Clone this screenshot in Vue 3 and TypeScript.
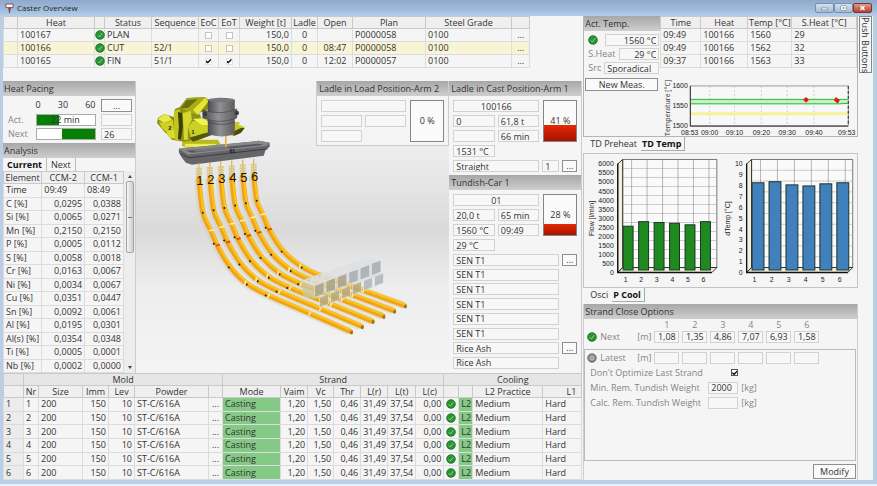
<script setup lang="ts">
interface Heat {
  id: string
  status: string
  seq: string
  eoc: boolean
  eot: boolean
  open: string
  plan: string
}

const heats: Heat[] = [
  { id: '100167', status: 'PLAN', seq: '', eoc: false, eot: false, open: '', plan: 'P0000058' },
  { id: '100166', status: 'CUT', seq: '52/1', eoc: false, eot: false, open: '08:47', plan: 'P0000058' },
  { id: '100165', status: 'FIN', seq: '51/1', eoc: true, eot: true, open: '12:02', plan: 'P0000057' },
]

const analysis: string[][] = [
  ['C [%]', '0,0295', '0,0388'],
  ['Si [%]', '0,0065', '0,0271'],
  ['Mn [%]', '0,2150', '0,2150'],
  ['P [%]', '0,0005', '0,0112'],
  ['S [%]', '0,0058', '0,0018'],
  ['Cr [%]', '0,0163', '0,0067'],
  ['Ni [%]', '0,0034', '0,0067'],
  ['Cu [%]', '0,0351', '0,0447'],
  ['Sn [%]', '0,0092', '0,0061'],
  ['Al [%]', '0,0195', '0,0301'],
  ['Al(s) [%]', '0,0354', '0,0348'],
  ['Ti [%]', '0,0005', '0,0001'],
  ['Nb [%]', '0,0002', '0,0000'],
]

const measurements: string[][] = [
  ['09:49', '100166', '1560', '29'],
  ['09:49', '100166', '1562', '32'],
  ['09:37', '100166', '1563', '33'],
]

const nozzles: string[] = ['SEN T1', 'SEN T1', 'SEN T1', 'SEN T1', 'SEN T1', 'SEN T1', 'Rice Ash', 'Rice Ash']
const closeLengths: string[] = ['1,08', '1,35', '4,86', '7,07', '6,93', '1,58']

/* Strand geometry: centre lines of the outer strands, the rest are interpolated */
type Pt = [number, number]
const first: Pt[] = [[63, 113], [67, 146], [75, 164], [82, 180], [95, 201], [111, 217], [133, 229], [174, 247], [215, 265]]
const last: Pt[] = [[118, 109], [121, 134], [127, 148], [134, 164], [148, 185], [166, 200], [187, 210], [228, 224], [269, 239]]

function strandPoints(i: number): Pt[] {
  const t = i / 5
  return first.map((p, k): Pt => [p[0] + (last[k][0] - p[0]) * t, p[1] + (last[k][1] - p[1]) * t])
}

function smooth(pts: Pt[]): string {
  let d = `M${pts[0][0]} ${pts[0][1]}`
  for (let k = 0; k < pts.length - 1; k++) {
    const a = pts[Math.max(k - 1, 0)]
    const b = pts[k]
    const c = pts[k + 1]
    const e = pts[Math.min(k + 2, pts.length - 1)]
    d += `C${b[0] + (c[0] - a[0]) / 6} ${b[1] + (c[1] - a[1]) / 6} ${c[0] - (e[0] - b[0]) / 6} ${c[1] - (e[1] - b[1]) / 6} ${c[0]} ${c[1]}`
  }
  return d
}

const strands = [0, 1, 2, 3, 4, 5].map((i) => {
  const pts = strandPoints(i)
  return { n: i + 1, pts, d: smooth(pts), x: pts[0][0], y: pts[0][1] }
})

const blocks = [0, 1, 2, 3, 4, 5].map((i) => ({
  ux: 179 + i * 11.4, uy: 219 - i * 4.4, lx: 184 + i * 11, ly: 231 - i * 4.2,
}))

/* Bar charts */
interface BarChart {
  id: string
  title: string
  titleX: number
  axis: number
  wall: number
  right: number
  step: number
  width: number
  fill: string
  labels: string[]
  values: number[]
  max: number
}
const charts: BarChart[] = [
  {
    id: 'flow', title: 'Flow [l/min]', titleX: 10, axis: 34, wall: 39, right: 134, step: 15.6, width: 10, fill: '#1f8a1f',
    labels: Array.from({ length: 13 }, (_, k) => String(k * 500)), values: [2500, 2760, 2710, 2670, 2580, 2760], max: 6000,
  },
  {
    id: 'temp', title: 'dTemp [°C]', titleX: 147, axis: 164, wall: 169, right: 271, step: 17.1, width: 12, fill: '#3f80bd',
    labels: Array.from({ length: 11 }, (_, k) => String(k)), values: [8.3, 8.4, 8.1, 8, 8.2, 8.3], max: 10,
  },
]
const tempTicks: [number, string][] = [[30, '08:53'], [50, '09:00'], [75, '09:10'], [102, '09:20'], [128, '09:30'], [155, '09:40'], [188, '09:53']]
</script>

<template>
  <div class="window">
    <svg class="defs" aria-hidden="true">
      <symbol id="ok" viewBox="0 0 10 10">
        <circle cx="5" cy="5" r="4.6" fill="#2c9436" />
        <circle cx="5" cy="5" r="4.2" fill="none" stroke="#1d7426" stroke-width=".7" />
        <path d="M2.8 5.4 4.3 6.9 7.3 3.2" fill="none" stroke="#9ad997" stroke-width=".9" />
      </symbol>
      <symbol id="off" viewBox="0 0 10 10">
        <circle cx="5" cy="5" r="4.2" fill="#8e8e8e" stroke="#5d5d5d" stroke-width=".9" />
        <circle cx="5" cy="5" r="2" fill="#a5a5a5" stroke="#c4c4c4" stroke-width=".7" />
      </symbol>
    </svg>

    <header class="titlebar">
      <svg class="app-icon" viewBox="0 0 10 12">
        <path d="M1 1h8v4H1z" fill="#fff" stroke="#7d4350" stroke-width="1" />
        <path d="M3 5h4L6 8H4z" fill="#c13a42" />
        <path d="M5 7v4" stroke="#555" stroke-width="1.4" />
      </svg>
      <h1>Caster Overview</h1>
      <div class="controls">
        <button aria-label="Minimize"><svg viewBox="0 0 18 10"><rect x="5" y="5" width="8" height="2.4" fill="#fff" stroke="#64758c" stroke-width=".7" /></svg></button>
        <button aria-label="Restore"><svg viewBox="0 0 18 10"><rect x="5.5" y="2" width="7" height="6" rx="1" fill="#fff" stroke="#64758c" stroke-width=".8" /><rect x="8" y="4" width="2" height="2" fill="#64758c" /></svg></button>
        <button class="close" aria-label="Close"><svg viewBox="0 0 18 10"><path d="M6.5 2.5l5 5m0-5l-5 5" stroke="#fff" stroke-width="1.8" /></svg></button>
      </div>
    </header>

    <main class="body">
      <section class="left">
        <table class="grid heats">
          <colgroup>
            <col class="w14" /><col class="w77" /><col class="w10" /><col class="w47" /><col class="w47" /><col class="w20" /><col class="w21" />
            <col class="w52" /><col class="w26" /><col class="w35" /><col class="w73" /><col /><col class="w18" />
          </colgroup>
          <thead>
            <tr>
              <th></th><th>Heat</th><th></th><th>Status</th><th>Sequence</th><th>EoC</th><th>EoT</th><th>Weight [t]</th>
              <th>Ladle</th><th>Open</th><th>Plan</th><th>Steel Grade</th><th></th>
            </tr>
          </thead>
          <tbody>
            <tr v-for="h in heats" :key="h.id" :class="{ active: h.status === 'CUT' }">
              <td></td><td>{{ h.id }}</td>
              <td class="ic"><svg class="dot"><use href="#ok" /></svg></td>
              <td>{{ h.status }}</td><td>{{ h.seq }}</td>
              <td class="c"><input class="tick" type="checkbox" :checked="h.eoc" :aria-label="`EoC ${h.id}`" /></td>
              <td class="c"><input class="tick" type="checkbox" :checked="h.eot" :aria-label="`EoT ${h.id}`" /></td>
              <td class="r">150,0</td><td class="c">0</td><td class="c">{{ h.open }}</td><td>{{ h.plan }}</td><td>0100</td><td class="c">...</td>
            </tr>
          </tbody>
        </table>

        <div class="middle">
          <aside class="side">
            <h2>Heat Pacing</h2>
            <div class="pacing">
              <span></span>
              <div class="scale"><span>0</span><span>30</span><span>60</span></div>
              <button class="btn">...</button>
              <label class="dim" for="act">Act.</label>
              <div class="bar"><i class="from-start"></i><b>22 min</b></div>
              <input id="act" class="field" readonly />
              <label class="dim" for="next">Next</label>
              <div class="bar"><i class="from-mid"></i></div>
              <input id="next" class="field" value="26" readonly />
            </div>
            <h2>Analysis</h2>
            <nav class="tabs"><button class="on">Current</button><button>Next</button></nav>
            <div class="analysis">
              <table class="grid">
                <colgroup><col /><col class="w43" /><col class="w39" /></colgroup>
                <thead><tr><th>Element</th><th>CCM-2</th><th>CCM-1</th></tr></thead>
                <tbody>
                  <tr><td>Time</td><td>09:49</td><td>08:49</td></tr>
                  <tr v-for="a in analysis" :key="a[0]"><td>{{ a[0] }}</td><td class="r">{{ a[1] }}</td><td class="r">{{ a[2] }}</td></tr>
                </tbody>
              </table>
              <div class="scroll"><i class="up"></i><b></b><i class="down"></i></div>
            </div>
          </aside>

          <div class="scene">
            <svg viewBox="0 14 314 292" preserveAspectRatio="xMinYMin meet" role="img" aria-label="Caster">
              <defs>
                <linearGradient id="drum"><stop offset="0" stop-color="#4b4b4d" /><stop offset=".45" stop-color="#919194" /><stop offset="1" stop-color="#5c5c5f" /></linearGradient>
              </defs>
              <!-- ladle turret -->
              <path d="M47 73h35l3 5-6 4H52l-6-3z" fill="#b9bb1c" />
              <path d="M49 77h31v3H49z" fill="#eced62" />
              <path d="M94 55 104 55 103 58 109 60 106 65 98 69 93 68z" fill="#c6c91e" />
              <path d="M97 65 105 61 109 61 105 66 98 69z" fill="#4b4c0d" />
              <path d="M22 51 28 47 38 50 39 42 44 40 51 31 68 30 73 33 74 44 64 50 74 54 79 62 77 67 67 71 60 73 48 75 36 73 27 63 21 56z" fill="#8e9112" />
              <path d="M45 40 52 31 69 30 73 33 60 47 53 46z" fill="#a9ac15" />
              <path d="M57 43 69 31 73 34 62 48z" fill="#e3e636" />
              <path d="M45 41 51 33 62 32 52 41z" fill="#6d6f0e" />
              <path d="M22 52 28 47 33 49 36 53 28 56z" fill="#e7ea48" />
              <path d="M23 55 29 56 37 53 38 63 33 67 26 61z" fill="#cfd224" />
              <path d="M30 66 38 62 40 72 34 71z" fill="#d9dc2d" />
              <path d="M38 44 44 42 45 72 40 74 38 66z" fill="#c2c51d" />
              <path d="M42 45 46 46 47 60 45 73 42 72 43 60z" fill="#3c3e0a" />
              <path d="M47 46 55 44 56 53 52 60 52 73 48 73z" fill="#d5d82a" />
              <path d="M52 60 57 54 68 55 76 59 78 64 65 68 55 70z" fill="#cdd024" />
              <path d="M57 52 68 51 76 58 66 58z" fill="#eff254" />
              <path d="M54 71 66 67 78 64 76 68 66 72 57 75z" fill="#55570c" />
              <path d="M63 46 74 42V51L67 52z" fill="#e9e9e2" />
              <text class="arm" x="34" y="63">2</text><text class="arm" x="57" y="67">1</text>
              <!-- ladle -->
              <path d="M72 33v34q14 5 27 0V33z" fill="url(#drum)" />
              <ellipse cx="85.5" cy="33" rx="13.5" ry="2.2" fill="#77777b" />
              <path d="M67 43q18 6 34-1v9q-17 7-34 0z" fill="url(#drum)" stroke="#3f3f42" stroke-width=".6" />
              <path d="M72 55q14 5 27 0" fill="none" stroke="#424245" stroke-width=".7" />
              <circle cx="69" cy="47" r="2.2" fill="#3b3b3e" /><circle cx="101" cy="46" r="2.2" fill="#3b3b3e" />
              <!-- tundish -->
              <path d="M43 82 123 74 134 76 134 80 130 83 128 89 56 98 50 96 46 91 43 86z" fill="#66666a" />
              <path d="M43 82 123 74 134 76 131 79 52 88z" fill="#88888c" />
              <path d="M50 84 122 77 128 78 56 86z" fill="#55555a" />
              <path d="M56 83 90 80 96 82 60 85z" fill="#77777b" />
              <path d="M45 87 53 91 132 82" fill="none" stroke="#3d3d41" stroke-width="1" />
              <path d="M90 69v11" stroke="#e8b12e" stroke-width="1.6" />
              <text class="code" x="96.5" y="86">01</text>
              <!-- strands -->
              <g v-for="s in strands" :key="s.n">
                <path :d="`M${s.x} ${s.y - 17}V${s.y}`" stroke="#e2a62f" stroke-width="1" />
                <path :d="`M${s.x} ${s.y - 12}V${s.y + 6}`" stroke="#d9c886" stroke-width="6" stroke-dasharray="2 .6" />
                <path :d="s.d" fill="none" stroke="#d3cbb6" stroke-width="8" stroke-opacity=".45" transform="translate(-1 0)" />
                <path :d="s.d" fill="none" stroke="#f0a416" stroke-width="5" stroke-linecap="round" />
                <path :d="s.d" fill="none" stroke="#fdc41b" stroke-width="2" transform="translate(1 -1)" />
                <path :d="`M${s.pts[2][0] - 2} ${s.pts[2][1]}l5 -1M${s.pts[5][0] - 1} ${s.pts[5][1] - 3}l-1 5M${s.pts[6][0] + 1} ${s.pts[6][1] - 2}l-2 4M${s.pts[7][0] + 1} ${s.pts[7][1] - 2}l-2 4`" stroke="#ffedbd" stroke-width="1.6" />
                <path :d="`M${s.pts[3][0] - 2} ${s.pts[3][1] - 1}l4 -1`" stroke="#dd4f16" stroke-width="2" />
                <g fill="#18211b">
                  <circle :cx="s.pts[1][0]" :cy="s.pts[1][1]" r="1" />
                  <circle :cx="s.pts[3][0] - 4" :cy="s.pts[3][1] - 3" r="1" />
                  <circle :cx="s.pts[4][0] - 2" :cy="s.pts[4][1]" r="1" />
                  <circle :cx="s.pts[5][0]" :cy="s.pts[5][1] + 1" r="1" />
                  <circle :cx="s.pts[6][0] - 3" :cy="s.pts[6][1]" r="1" />
                </g>
                <ellipse :cx="s.pts[8][0] + 1" :cy="s.pts[8][1] + 1" rx="1.5" ry="2" fill="#98761e" />
                <text class="num" :x="s.x + 1" :y="s.y + 5">{{ s.n }}</text>
              </g>
              <!-- cut billets -->
              <path d="M165 214 230 192 245 196 245 208 181 231 168 231z" fill="#cfd3d6" fill-opacity=".5" />
              <path d="M166 216 179 219 179 233 169 230z" fill="#c9c58f" fill-opacity=".6" />
              <g v-for="(b, k) in blocks" :key="k" stroke="#e4e7e8" stroke-width=".7">
                <path :d="`M${b.ux} ${b.uy}l-11 -5l9 -3l11 4z`" fill="#dfe3e5" fill-opacity=".7" />
                <path :d="`M${b.ux} ${b.uy}l9.5 -3.5v12l-9.5 3.5z`" :fill="k < 3 ? '#a9a387' : '#a9adb0'" fill-opacity=".85" />
                <path :d="`M${b.lx} ${b.ly}l9 -3.5v10l-9 3.5z`" :fill="k < 4 ? '#b5ab80' : '#b0b4b7'" fill-opacity=".85" />
              </g>
            </svg>

            <div class="load">
              <h2>Ladle in Load Position-Arm 2</h2>
              <div class="vessel">
                <div class="fields">
                  <input class="field wide" readonly aria-label="Heat" />
                  <input class="field" readonly aria-label="Ladle" /><input class="field" readonly aria-label="Weight" />
                  <input class="field" readonly aria-label="Time" />
                </div>
                <div class="gauge"><b>0 %</b></div>
              </div>
            </div>
          </div>

          <aside class="cast">
            <h2>Ladle in Cast Position-Arm 1</h2>
            <div class="vessel">
              <div class="fields">
                <input class="field wide mid" value="100166" readonly aria-label="Heat" />
                <input class="field" value="0" readonly aria-label="Ladle" /><input class="field" value="61,8 t" readonly aria-label="Weight" />
                <input class="field" readonly aria-label="Code" /><input class="field" value="66 min" readonly aria-label="Time" />
                <input class="field" value="1531 °C" readonly aria-label="Temperature" />
              </div>
              <div class="gauge"><i :style="{ height: '41%' }"></i><b>41 %</b></div>
              <div class="line">
                <input class="field" value="Straight" readonly aria-label="Shroud" />
                <input class="field tiny" value="1" readonly aria-label="Count" />
                <button class="btn more">...</button>
              </div>
            </div>
            <h2>Tundish-Car 1</h2>
            <div class="vessel">
              <div class="fields">
                <input class="field wide mid" value="01" readonly aria-label="Tundish" />
                <input class="field" value="20,0 t" readonly aria-label="Weight" /><input class="field" value="65 min" readonly aria-label="Time" />
                <input class="field" value="1560 °C" readonly aria-label="Temperature" /><input class="field" value="09:49" readonly aria-label="Measured" />
                <input class="field" value="29 °C" readonly aria-label="Superheat" />
              </div>
              <div class="gauge"><i :style="{ height: '28%' }"></i><b>28 %</b></div>
            </div>
            <div class="nozzles">
              <div v-for="(n, k) in nozzles" :key="k" class="line">
                <input class="field" :value="n" readonly :aria-label="`Material ${k + 1}`" />
                <button v-if="k === 0 || k === 6" class="btn more">...</button>
                <span v-else class="more"></span>
              </div>
            </div>
          </aside>
        </div>

        <table class="grid strands">
          <colgroup>
            <col class="w20" /><col class="w15" /><col class="w44" /><col class="w26" /><col class="w26" /><col class="w74" /><col class="w14" />
            <col /><col class="w27" /><col class="w26" /><col class="w27" /><col class="w27" /><col class="w28" /><col class="w28" />
            <col class="w15" /><col class="w14" /><col class="w70" /><col class="w39" />
          </colgroup>
          <thead>
            <tr class="groups"><th></th><th colspan="6">Mold</th><th colspan="7">Strand</th><th colspan="4">Cooling</th></tr>
            <tr>
              <th></th><th>Nr</th><th>Size</th><th>Imm</th><th>Lev</th><th>Powder</th><th></th><th>Mode</th><th>Vaim</th><th>Vc</th>
              <th>Thr</th><th>L(r)</th><th>L(t)</th><th>L(c)</th><th></th><th></th><th>L2 Practice</th><th class="l1">L1</th>
            </tr>
          </thead>
          <tbody>
            <tr v-for="n in 6" :key="n">
              <th>{{ n }}</th><td>{{ n }}</td><td>200</td><td class="r">150</td><td class="r">10</td><td>ST-C/616A</td><td class="c">...</td>
              <td class="green">Casting</td><td class="r">1,20</td><td class="r">1,50</td><td class="r">0,46</td><td class="r">31,49</td>
              <td class="r">37,54</td><td class="r">0,00</td><td class="ic"><svg class="dot"><use href="#ok" /></svg></td>
              <td class="green">L2</td><td>Medium</td><td>Hard</td>
            </tr>
          </tbody>
        </table>
      </section>

      <section class="right">
        <div class="td">
          <div class="acttemp">
            <h2>Act. Temp.</h2>
            <div class="rows">
              <div class="line"><svg class="dot"><use href="#ok" /></svg><input class="field r" value="1560 °C" readonly aria-label="Temperature" /></div>
              <div class="line"><label class="dim lw" for="sh">S.Heat</label><input id="sh" class="field r" value="29 °C" readonly /></div>
              <div class="line"><label class="dim" for="src">Src</label><input id="src" class="field" value="Sporadical" readonly /></div>
            </div>
            <button class="btn meas">New Meas.</button>
          </div>
          <div class="tdright">
            <table class="grid">
              <colgroup><col class="w40" /><col class="w47" /><col class="w44" /><col /></colgroup>
              <thead><tr><th>Time</th><th>Heat</th><th>Temp [°C]</th><th>S.Heat [°C]</th></tr></thead>
              <tbody><tr v-for="(m, k) in measurements" :key="k"><td v-for="(v, j) in m" :key="j">{{ v }}</td></tr></tbody>
            </table>
            <svg class="tempchart" viewBox="0 0 198 56">
              <text class="lab" transform="translate(10 28) rotate(-90)">Temperature [°C]</text>
              <rect x="30.5" y="6" width="159" height="40" fill="#f8f8f8" stroke="#777" stroke-width=".7" />
              <path v-for="t in tempTicks.slice(1, 6)" :key="t[0]" :d="`M${t[0]} 6v40`" stroke="#bbb" stroke-width=".7" stroke-dasharray="2 2" />
              <path d="M31 20h158v4H31z" fill="#c5f0c2" /><path d="M31 19.5h158M31 24h150l8-.5" stroke="#20b833" fill="none" />
              <path d="M31 34h158" stroke="#f4f294" stroke-width="3" />
              <path d="M30.5 6v40.5h159" fill="none" stroke="#333" /><path d="M189.5 6v40" stroke="#222" stroke-dasharray="3 2" />
              <path d="M147 17l3 3-3 3-3-3zM177 17l4 3.500-2 3.500-4-3.500z" fill="#e21b12" />
              <text class="ax e" x="28" y="8">1600</text><text class="ax e" x="28" y="28.5">1550</text><text class="ax e" x="28" y="48.5">1500</text>
              <text v-for="t in tempTicks" :key="t[1]" class="ax m" :x="t[0]" y="55">{{ t[1] }}</text>
            </svg>
          </div>
        </div>
        <nav class="tabs low"><button>TD Preheat</button><button class="on">TD Temp</button></nav>

        <div class="bars">
          <svg viewBox="0 0 275 134">
            <g v-for="c in charts" :key="c.id">
              <path :d="`M${c.wall} 5.5H${c.right}V114.5H${c.wall}z`" fill="#fafafa" stroke="#555" stroke-width=".8" />
              <path v-for="k in c.labels.length - 2" :key="k" :d="`M${c.wall} ${114.5 - k * 109 / (c.labels.length - 1)}H${c.right}`" stroke="#aaa" stroke-width=".6" />
              <path v-for="k in 6" :key="'v' + k" :d="`M${c.wall + 9 + (k - 1) * c.step} 5.5V114.5`" stroke="#888" stroke-width=".6" />
              <path :d="`M${c.wall} 5.5L${c.axis} 10V119.5L${c.wall} 114.5zM${c.axis} 119.5H${c.right - 5}L${c.right} 114.5H${c.wall}z`" fill="#f3efdd" stroke="#222" stroke-width=".9" />
              <path :d="`M${c.axis} 9.5V119.5H${c.right - 5}`" fill="none" stroke="#111" stroke-width="1.3" />
              <rect v-for="(v, k) in c.values" :key="'b' + k" :x="c.wall + .5 + k * c.step" :y="117 - v / c.max * 106" :width="c.width" :height="v / c.max * 106" :fill="c.fill" stroke="#1d332a" stroke-width="1" />
              <text v-for="(l, k) in c.labels" :key="'l' + k" class="ax e" :x="c.axis - 4" :y="122 - k * 109.5 / (c.labels.length - 1)">{{ l }}</text>
              <text v-for="k in 6" :key="'c' + k" class="ax m" :x="c.axis + 8 + (k - 1) * (c.step + .1)" y="129">{{ k }}</text>
              <text class="ax m" :transform="`translate(${c.titleX} 65) rotate(-90)`">{{ c.title }}</text>
            </g>
          </svg>
        </div>
        <nav class="tabs low"><button>Osci</button><button class="on">P Cool</button></nav>

        <div class="closeopts">
          <h2>Strand Close Options</h2>
          <div class="lengths dim heads"><span></span><span></span><span></span><span v-for="n in 6" :key="n">{{ n }}</span></div>
          <div class="lengths next">
            <svg class="dot"><use href="#ok" /></svg><span class="dim">Next</span><span class="dim">[m]</span>
            <input v-for="(v, k) in closeLengths" :key="k" class="field mid" :value="v" :aria-label="`Next strand ${k + 1}`" />
          </div>
          <div class="box">
            <div class="lengths">
              <svg class="dot"><use href="#off" /></svg><span class="dim">Latest</span><span class="dim">[m]</span>
              <input v-for="n in 6" :key="n" class="field" :aria-label="`Latest strand ${n}`" />
            </div>
            <div class="opt"><label for="opt">Don't Optimize Last Strand</label><input id="opt" class="tick dark" type="checkbox" checked /></div>
            <div class="opt"><label for="minw">Min. Rem. Tundish Weight</label><input id="minw" class="field" value="2000" /><span>[kg]</span></div>
            <div class="opt"><label for="calcw">Calc. Rem. Tundish Weight</label><input id="calcw" class="field" /><span>[kg]</span></div>
          </div>
          <div class="foot"><button class="btn">Modify</button></div>
        </div>
      </section>

      <aside class="strip"><button>Push Buttons</button></aside>
    </main>
  </div>
</template>

<style>
body {
  background: #b8cfe6;
}
</style>

<style scoped>
.window, .window * {
  box-sizing: border-box;
}
.window {
  min-height: 100vh;
  display: flex;
  flex-direction: column;
  padding: 0 4px 4px 3px;
  background: #b8cfe6;
  font: 9px/12px "Open Sans", "Noto Sans", sans-serif;
  color: #333;
  border-bottom: 2px solid #e4f1f6;
}
.defs {
  position: absolute;
  width: 0;
  height: 0;
}
button, input {
  font: inherit;
  color: inherit;
  margin: 0;
  min-width: 0;
}
button {
  padding: 0;
  border: 0;
  background: none;
}
.titlebar {
  height: 16px;
  margin: 0 -4px 0 -3px;
  padding: 0 5px 0 5px;
  display: flex;
  align-items: center;
  gap: 3px;
  background: linear-gradient(#8ea9ca, #a0bcdc 60%, #b4cde9);
}
.app-icon {
  width: 9px;
  height: 11px;
}
h1 {
  flex: 1;
  margin: 0;
  font-size: 8px;
  line-height: 16px;
  font-weight: 400;
  color: #222;
}
.controls {
  display: flex;
  align-self: flex-start;
  margin-top: 3px;
}
.controls button {
  width: 19px;
  height: 10px;
  border: 1px solid #7890ad;
  border-radius: 2px;
  background: linear-gradient(#d5e2f0, #a4bad5);
  display: flex;
}
.controls svg {
  width: 100%;
  height: 100%;
}
.controls .close {
  background: linear-gradient(#dc9c90, #bc3f28);
  border-color: #75382f;
}
.body {
  flex: 1;
  display: grid;
  grid-template-columns: minmax(0, 580fr) minmax(0, 275fr) 14px;
  column-gap: 1px;
  background: #f5f5f5;
}
h2 {
  margin: 0;
  height: 15px;
  padding: 0 1px;
  font-size: 9px;
  line-height: 16px;
  font-weight: 400;
  background: linear-gradient(#a7a7a7, #cecece);
  white-space: nowrap;
}
.left {
  display: flex;
  flex-direction: column;
}

/* data grids */
.grid {
  border-collapse: collapse;
  table-layout: fixed;
  width: 100%;
  white-space: nowrap;
}
.grid th, .grid td {
  height: 13px;
  padding: 0 2px;
  line-height: 12px;
  border: 1px solid #dcdcdc;
  text-align: left;
  font-weight: 400;
}
.grid thead th {
  height: 12px;
  line-height: 11px;
  padding: 0;
  text-align: center;
  background: #efefef;
  border-color: #c9c9c9;
}
.grid td.r {
  text-align: right;
}
.grid thead th.l1 {
  text-align: right;
  padding-right: 5px;
}
.grid td.c, .grid td.ic {
  text-align: center;
  padding: 0;
}
.grid .active {
  background: #f7f5d6;
}
.grid .green {
  background: #84c985;
}
.dot {
  display: block;
  width: 10px;
  height: 10px;
  margin: auto;
}
.heats {
  width: 91%;
}
.tick {
  appearance: none;
  display: block;
  width: 7px;
  height: 7px;
  margin: auto;
  border: 1px solid #c4c4c4;
  background: #fff;
}
.tick:checked {
  border-color: #e2e2e2;
}
.tick:checked::before {
  content: "";
  display: block;
  height: 5px;
  background: #111;
  clip-path: polygon(0 35%, 35% 60%, 100% 0, 100% 35%, 38% 100%, 0 75%);
}
.w10 { width: 10px; } .w14 { width: 14px; } .w15 { width: 15px; } .w18 { width: 18px; } .w20 { width: 20px; }
.w21 { width: 21px; } .w26 { width: 26px; } .w27 { width: 27px; } .w28 { width: 28px; } .w35 { width: 35px; }
.w39 { width: 39px; } .w40 { width: 40px; } .w43 { width: 43px; } .w44 { width: 44px; } .w47 { width: 47px; }
.w52 { width: 52px; } .w70 { width: 70px; } .w73 { width: 73px; } .w74 { width: 74px; } .w77 { width: 77px; }

/* shared controls */
.field {
  display: block;
  width: 100%;
  height: 12px;
  padding: 0 2px;
  border: 1px solid #d2d2d2;
  background: #f7f7f7;
  line-height: 10px;
  border-radius: 0;
}
.field.r { text-align: right; }
.field.mid { text-align: center; }
.btn {
  height: 13px;
  border: 1px solid #8f8f8f;
  background: #fafafa;
  line-height: 10px;
}
.dim {
  color: #858585;
}
.line {
  display: flex;
  align-items: center;
  gap: 3px;
}
.line .field {
  flex: 1;
}
.more {
  flex: none;
  width: 15px;
  height: 12px;
}
.tabs {
  display: flex;
  height: 13px;
}
.tabs button {
  padding: 0 4px;
  line-height: 12px;
  border-right: 1px solid #bbb;
}
.tabs .on {
  font-weight: 700;
  color: #111;
}

/* middle */
.middle {
  flex: 1;
  margin-top: 13px;
  display: grid;
  grid-template-columns: 133px minmax(0, 1fr) 133px;
}
.side {
  border-right: 1px solid #ccc;
}
.pacing {
  height: 47px;
  padding: 3px 3px 3px 5px;
  display: grid;
  grid-template-columns: 22px 60px 31px;
  justify-content: space-between;
  align-content: space-between;
}
.scale {
  display: flex;
  justify-content: space-between;
}
.bar {
  position: relative;
  height: 12px;
  border: 1px solid #aaa;
  background: #fff;
  text-align: center;
  line-height: 10px;
}
.bar i {
  position: absolute;
  top: 0;
  bottom: 0;
  background: #058005;
}
.from-start { left: 0; right: 62%; }
.from-mid { left: 44%; right: 0; }
.bar b, .gauge b {
  position: relative;
  font-weight: 400;
}
.analysis {
  display: flex;
}
.analysis .grid {
  flex: 1;
  height: 202px;
  width: auto;
}
.scroll {
  width: 11px;
  background: #ededed;
  display: flex;
  flex-direction: column;
  align-items: center;
  padding: 4px 0;
  gap: 3px;
}
.scroll b {
  width: 8px;
  height: 72px;
  border: 1px solid #a5a5a5;
  border-radius: 2px;
  background: linear-gradient(#777, #777) center / 4px 1px no-repeat, linear-gradient(90deg, #f6f6f6, #ccc);
}
.scroll i {
  border: 2px solid transparent;
}
.scroll .up {
  border-bottom: 3px solid #444;
  border-top: 0;
}
.scroll .down {
  border-top: 3px solid #444;
  border-bottom: 0;
  margin-top: auto;
}
.scene {
  position: relative;
  background: linear-gradient(#f4f4f4, #ececec 25%, #dadada 51%, #dedede 55%, #ededed 70%, #f4f4f4);
}
.scene > svg {
  display: block;
  width: 100%;
}
.load {
  position: absolute;
  top: 0;
  right: 0;
  width: 133px;
  background: #f5f5f5;
  border: solid #ccc;
  border-width: 0 1px 1px;
}
.cast {
  display: flex;
  flex-direction: column;
  border-right: 1px solid #ccc;
}
.cast h2, .load h2 { padding-left: 2px; }
.vessel {
  padding: 4px 4px 3px;
  display: grid;
  grid-template-columns: minmax(0, 1fr) 34px;
  gap: 3px 4px;
}
.fields {
  display: grid;
  grid-template-columns: 1fr 1fr;
  gap: 3px;
}
.wide, .vessel .line {
  grid-column: 1 / -1;
}
.gauge {
  position: relative;
  height: 42px;
  border: 1px solid #858585;
  background: #fafafa;
  text-align: center;
  line-height: 40px;
}
.gauge i {
  position: absolute;
  left: 0;
  right: 0;
  bottom: 0;
  background: linear-gradient(#e32a05, #a81300);
}
.line .tiny {
  max-width: 17px;
}
.nozzles {
  flex: 1;
  padding: 0 4px 4px;
  display: flex;
  flex-direction: column;
  justify-content: space-between;
}
.num { font: 13px "Liberation Sans", sans-serif; text-anchor: middle; fill: #111; }
.arm { font: bold 6px "Liberation Sans", sans-serif; text-anchor: middle; fill: #222; }
.code { font: bold 5px "Liberation Sans", sans-serif; text-anchor: middle; fill: #111; }

/* strand table */
.strands {
  height: 107px;
}
.strands thead tr.groups th {
  background: #e6e6e6;
}
.strands tbody th {
  background: #ececec;
  vertical-align: middle;
}

/* right */
.right {
  display: flex;
  flex-direction: column;
}
.td {
  display: grid;
  grid-template-columns: 76px minmax(0, 1fr);
  height: 121px;
  border: solid #b5b5b5;
  border-width: 0 1px 1px;
}
.rows {
  display: grid;
  gap: 2px;
  padding: 3px 1px 2px 4px;
}
.rows .dot { flex: none; margin: 0 4px 0 0; }
.lw { width: 28px; }
.meas {
  width: 73px;
  margin: 2px 1px;
}
.tempchart {
  display: block;
  width: 100%;
  margin-top: 12px;
  overflow: visible;
}
.ax { font: 7px "Liberation Sans", sans-serif; fill: #222; }
.ax.e { text-anchor: end; }
.ax.m { text-anchor: middle; }
.lab { font-size: 7px; text-anchor: middle; fill: #333; }
.low { height: 16px; padding-left: 3px; }
.low button { height: 14px; line-height: 14px; border: 0; }
.low .on { border: solid #aaa; border-width: 0 1px 1px 0; padding: 0 3px 0 1px; }
.bars {
  border: 1px solid #c4c4c4;
}
.bars svg {
  display: block;
  width: 100%;
}
.closeopts {
  flex: 1;
  display: flex;
  flex-direction: column;
  border: solid #ccc;
  border-width: 0 1px;
}
.lengths {
  display: grid;
  grid-template-columns: 10px 34px 14px repeat(6, 25px);
  column-gap: 3px;
  padding-left: 3px;
  align-items: center;
}
.box .lengths { padding-left: 2px; }
.lengths .field { padding: 0 1px; }
.heads { text-align: center; }
.next { margin-bottom: 6px; }
.box {
  flex: 1;
  margin-right: 1px;
  padding-top: 2px;
  border: 1px solid #bbb;
  display: flex;
  flex-direction: column;
  gap: 3px;
}
.opt {
  display: grid;
  grid-template-columns: 115px 30px 1fr;
  gap: 3px;
  padding-left: 5px;
  color: #858585;
  align-items: center;
}
.opt .field { color: #333; }
.tick.dark {
  margin: 0;
  justify-self: end;
  border-color: #555;
}
.foot {
  display: flex;
  justify-content: flex-end;
  padding: 3px 1px 1px;
}
.foot .btn {
  width: 43px;
  height: 15px;
}
.strip {
  display: flex;
  align-items: flex-start;
}
.strip button {
  width: 13px;
  height: 57px;
  border: 1px solid #888;
  writing-mode: vertical-rl;
  line-height: 11px;
  white-space: nowrap;
}
</style>
